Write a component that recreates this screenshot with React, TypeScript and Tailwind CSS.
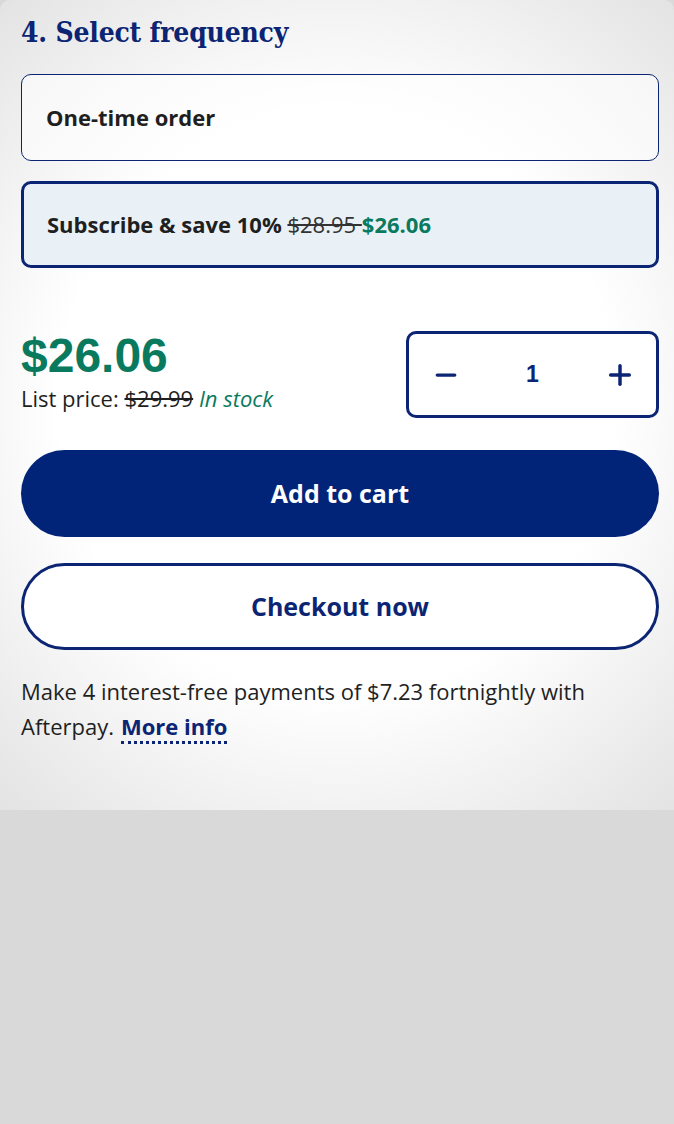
import { Minus, Plus } from "lucide-react";

const BODY = "font-['Open_Sans',sans-serif]";

export default function App() {
  return (
    <div className="min-h-[1124px] bg-[#d9d9d9]">
      <div className="rounded-t-[10px] bg-[radial-gradient(ellipse_75%_65%_at_50%_50%,#ffffff_55%,#e4e4e4_100%)] pl-[21px] pr-[15px] pt-[14px] pb-[66px]">
        <h2 className="font-['DejaVu_Serif_Condensed','DejaVu_Serif',serif] text-[28px] font-bold leading-[38px] tracking-[-0.2px] text-[#0b2473]">
          4. Select frequency
        </h2>

        <div className={`${BODY} mt-[22px] flex flex-col gap-[20px]`}>
          <div className="flex h-[87px] items-center rounded-[10px] border-[1.5px] border-[#0b2473] bg-white/60 px-[24px]">
            <span className="text-[22px] font-bold text-[#1f1f1f]">One-time order</span>
          </div>
          <div className="flex h-[87px] items-center rounded-[10px] border-[3px] border-[#0b2473] bg-[#eaf1f6] px-[23px]">
            <span className="text-[22px] font-bold text-[#1f1f1f]">
              Subscribe &amp; save 10%{" "}
              <span className="font-normal text-[#333] line-through">$28.95 </span>
              <span className="text-[#0a7a5e]">$26.06</span>
            </span>
          </div>
        </div>

        <div className="mt-[63px] flex items-center justify-between">
          <div className="-mt-[6px]">
            <div className="font-['Liberation_Sans',Arial,sans-serif] text-[48px] font-bold leading-[50px] text-[#0a7a5e]">
              $26.06
            </div>
            <div className={`${BODY} mt-[2px] text-[22px] font-normal leading-[30px] text-[#1f1f1f]`}>
              List price: <span className="line-through">$29.99</span>{" "}
              <span className="italic text-[#0a7a5e]">In stock</span>
            </div>
          </div>
          <div className="flex h-[87px] w-[253px] items-center justify-between rounded-[10px] border-[3px] border-[#0b2473] bg-white pl-[22px] pr-[20px] text-[#0b2473]">
            <Minus size={30} strokeWidth={2.6} />
            <span className="font-['Liberation_Sans',Arial,sans-serif] text-[23px] font-bold">1</span>
            <Plus size={32} strokeWidth={2.6} />
          </div>
        </div>

        <button className={`${BODY} mt-[32px] flex h-[87px] w-full items-center justify-center rounded-full bg-[#012479] text-[25px] font-bold text-white`}>
          Add to cart
        </button>
        <button className={`${BODY} mt-[26px] flex h-[87px] w-full items-center justify-center rounded-full border-[3px] border-[#0b2473] bg-white text-[25px] font-bold text-[#0b2473]`}>
          Checkout now
        </button>

        <p className={`${BODY} mt-[24px] text-[22px] font-normal leading-[35px] text-[#1f1f1f]`}>
          <span>Make 4 interest-free payments of $7.23 fortnightly with Afterpay.</span>
          <a className="ml-[7px] inline-block border-b-[3px] border-dotted border-[#0b2473] font-bold leading-[30px] text-[#0b2473]">
            More info
          </a>
        </p>
      </div>
    </div>
  );
}
